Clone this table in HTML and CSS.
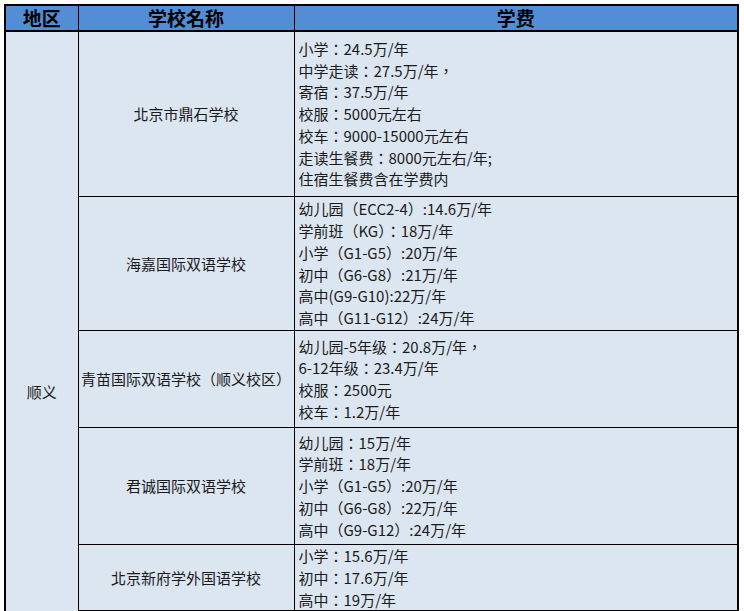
FILE: index.html
```html
<!DOCTYPE html>
<html lang="zh-CN">
<head>
<meta charset="utf-8">
<title>顺义学校学费</title>
<link rel="stylesheet" href="styles.css">
</head>
<body>
<div class="sheet">
  <table class="fees">
    <colgroup>
      <col class="c-region">
      <col class="c-school">
      <col class="c-fee">
    </colgroup>
    <thead>
      <tr class="head">
        <th>地区</th>
        <th>学校名称</th>
        <th>学费</th>
      </tr>
    </thead>
    <tbody>
      <tr class="r1">
        <td class="region" rowspan="6">顺义</td>
        <td class="school">北京市鼎石学校</td>
        <td class="fee">小学：24.5万/年<br>中学走读：27.5万/年，<br>寄宿：37.5万/年<br>校服：5000元左右<br>校车：9000-15000元左右<br>走读生餐费：8000元左右/年;<br>住宿生餐费含在学费内</td>
      </tr>
      <tr class="r2">
        <td class="school">海嘉国际双语学校</td>
        <td class="fee">幼儿园（ECC2-4）:14.6万/年<br>学前班（KG）：18万/年<br>小学（G1-G5）:20万/年<br>初中（G6-G8）:21万/年<br>高中(G9-G10):22万/年<br>高中（G11-G12）:24万/年</td>
      </tr>
      <tr class="r3">
        <td class="school">青苗国际双语学校（顺义校区）</td>
        <td class="fee">幼儿园-5年级：20.8万/年，<br>6-12年级：23.4万/年<br>校服：2500元<br>校车：1.2万/年</td>
      </tr>
      <tr class="r4">
        <td class="school">君诚国际双语学校</td>
        <td class="fee">幼儿园：15万/年<br>学前班：18万/年<br>小学（G1-G5）:20万/年<br>初中（G6-G8）:22万/年<br>高中（G9-G12）:24万/年</td>
      </tr>
      <tr class="r5">
        <td class="school">北京新府学外国语学校</td>
        <td class="fee">小学：15.6万/年<br>初中：17.6万/年<br>高中：19万/年</td>
      </tr>
      <tr class="r6">
        <td class="school"></td>
        <td class="fee"></td>
      </tr>
    </tbody>
  </table>
</div>
</body>
</html>
```
FILE: styles.css
```css
html, body {
  margin: 0;
  padding: 0;
  background: #ffffff;
}

body {
  font-family: "Noto Sans CJK TC", "Noto Sans CJK SC", sans-serif;
  font-feature-settings: "locl" 0;
  color: #1a1a1a;
}

.sheet {
  padding: 4px 0 0 4px;
}

.fees {
  width: 735px;
  table-layout: fixed;
  border-collapse: collapse;
  border: 2px solid #000000;
  background: #dce6f1;
}

.c-region { width: 73px; }
.c-school { width: 216px; }

.fees th,
.fees td {
  border: 1px solid #000000;
  padding: 0;
  font-size: 15px;
  line-height: 21.75px;
  vertical-align: middle;
}

.head th {
  background: #538dd5;
  height: 24px;
  font-size: 19px;
  font-weight: bold;
  line-height: 24px;
  color: #000000;
  text-align: center;
  border-bottom: 2px solid #000000;
}

.region,
.school {
  text-align: center;
}

.fee {
  text-align: left;
  padding-left: 4px !important;
  white-space: nowrap;
}

.r1 td { height: 164px; }
.r2 td { height: 133px; }
.r3 td { height: 96px; }
.r4 td { height: 116px; }
.r5 td { height: 64px; }
.r6 td { height: 140px; }
```
